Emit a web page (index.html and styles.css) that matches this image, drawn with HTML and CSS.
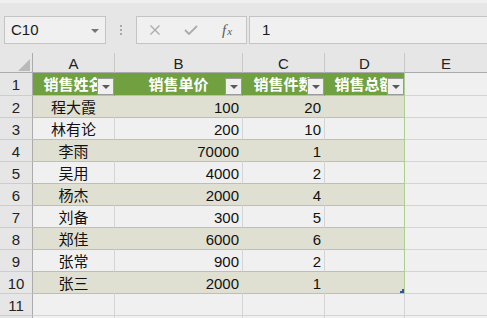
FILE: index.html
```html
<!DOCTYPE html>
<html lang="zh-CN">
<head>
<meta charset="utf-8">
<title>Sheet</title>
<link rel="stylesheet" href="styles.css">
</head>
<body>
<div class="ribbon-edge"></div>
<div class="formula-bar">
  <div class="name-box"><span class="name-text">C10</span><span class="caret"></span></div>
  <div class="grip"><i></i><i></i><i></i></div>
  <div class="fx-buttons">
    <span class="fx-btn"><svg width="12" height="10" viewBox="0 0 12 10"><path d="M1.5 0.5L10.5 9.5M10.5 0.5L1.5 9.5" stroke="#ababab" stroke-width="1.3" fill="none"/></svg></span>
    <span class="fx-btn"><svg width="14" height="10" viewBox="0 0 14 10"><path d="M1 5L5 9L13 1" stroke="#ababab" stroke-width="1.8" fill="none"/></svg></span>
    <span class="fx-btn fx-text"><span class="fx-f">f</span><span class="fx-x">x</span></span>
  </div>
  <div class="formula-input">1</div>
</div>
<div class="sheet">
  <div class="corner"><svg width="12" height="12" viewBox="0 0 12 12"><path d="M12 0V12H0Z" fill="#b9b9b9"/></svg></div>
  <div class="ch">A</div><div class="ch">B</div><div class="ch">C</div><div class="ch">D</div><div class="ch">E</div>

  <div class="rh rh1">1</div>
  <div class="th"><span class="th-text">销售姓名</span><span class="filter"></span></div>
  <div class="th"><span class="th-text">销售单价</span><span class="filter"></span></div>
  <div class="th"><span class="th-text">销售件数</span><span class="filter"></span></div>
  <div class="th th-last"><span class="th-text">销售总额</span><span class="filter"></span></div>
  <div class="c c1"></div>

  <div class="rh">2</div>
  <div class="td band ctr">程大霞</div><div class="td band num">100</div><div class="td band num">20</div><div class="td band last"></div><div class="c"></div>
  <div class="rh">3</div>
  <div class="td ctr">林有论</div><div class="td num">200</div><div class="td num">10</div><div class="td last"></div><div class="c"></div>
  <div class="rh">4</div>
  <div class="td band ctr">李雨</div><div class="td band num">70000</div><div class="td band num">1</div><div class="td band last"></div><div class="c"></div>
  <div class="rh">5</div>
  <div class="td ctr">吴用</div><div class="td num">4000</div><div class="td num">2</div><div class="td last"></div><div class="c"></div>
  <div class="rh">6</div>
  <div class="td band ctr">杨杰</div><div class="td band num">2000</div><div class="td band num">4</div><div class="td band last"></div><div class="c"></div>
  <div class="rh">7</div>
  <div class="td ctr">刘备</div><div class="td num">300</div><div class="td num">5</div><div class="td last"></div><div class="c"></div>
  <div class="rh">8</div>
  <div class="td band ctr">郑佳</div><div class="td band num">6000</div><div class="td band num">6</div><div class="td band last"></div><div class="c"></div>
  <div class="rh">9</div>
  <div class="td ctr">张常</div><div class="td num">900</div><div class="td num">2</div><div class="td last"></div><div class="c"></div>
  <div class="rh">10</div>
  <div class="td band ctr">张三</div><div class="td band num">2000</div><div class="td band num">1</div><div class="td band last handle-cell"><svg class="handle" width="4" height="4" viewBox="0 0 4 4"><path d="M2 0H4V4H0V2H2Z" fill="#30549f"/></svg></div><div class="c"></div>

  <div class="rh">11</div>
  <div class="c"></div><div class="c"></div><div class="c"></div><div class="c"></div><div class="c"></div>
  <div class="rh"></div>
  <div class="c"></div><div class="c"></div><div class="c"></div><div class="c"></div><div class="c"></div>
</div>
</body>
</html>
```
FILE: styles.css
```css
* { box-sizing: border-box; }
html, body {
  margin: 0;
  padding: 0;
  width: 487px;
  height: 318px;
  overflow: hidden;
  background: #e6e6e6;
  font-family: "Liberation Sans", "Noto Sans CJK SC", sans-serif;
  font-size: 15px;
  color: #1e1e1e;
}
.ribbon-edge {
  height: 3px;
  background: #efefef;
}
.formula-bar {
  display: flex;
  align-items: stretch;
  height: 50px;
  padding: 13px 0 9px 4px;
}
.name-box {
  width: 102px;
  height: 28px;
  border: 1px solid #c4c4c4;
  background: #f0f0f0;
  display: flex;
  align-items: center;
  justify-content: space-between;
  padding: 0 6px 0 6px;
}
.name-text {
  line-height: 26px;
  color: #1a1a1a;
}
.caret {
  width: 0;
  height: 0;
  border-left: 4px solid transparent;
  border-right: 4px solid transparent;
  border-top: 4px solid #767676;
  margin-top: 1px;
}
.grip {
  width: 30px;
  display: flex;
  flex-direction: column;
  align-items: center;
  justify-content: center;
  gap: 2px;
}
.grip i {
  display: block;
  width: 2px;
  height: 2px;
  background: #a9a9a9;
}
.fx-buttons {
  width: 111px;
  height: 28px;
  border: 1px solid #c4c4c4;
  background: #f0f0f0;
  display: flex;
  align-items: center;
  padding-left: 0;
}
.fx-btn {
  width: 36px;
  display: flex;
  justify-content: center;
  align-items: center;
}
.fx-text {
  font-family: "Liberation Serif", "DejaVu Serif", serif;
  font-style: italic;
  color: #5a5a5a;
  font-size: 15px;
  line-height: 1;
}
.fx-f { font-size: 15px; }
.fx-x { font-size: 11px; margin-left: 1px; margin-top: 3px; }
.formula-input {
  flex: 1;
  margin-left: 2px;
  margin-right: -2px;
  height: 28px;
  border: 1px solid #c4c4c4;
  background: #f0f0f0;
  line-height: 26px;
  padding-left: 12px;
  color: #1a1a1a;
}
.sheet {
  display: grid;
  grid-template-columns: 33px 82px 128px 82px 80px 83px;
  grid-template-rows: 20px 23px repeat(11, 22px);
}
.sheet > div {
  border-right: 1px solid #d4d4d4;
  border-bottom: 1px solid #d4d4d4;
  white-space: nowrap;
  overflow: hidden;
  line-height: 18px;
  padding-top: 3px;
}
.sheet > .corner {
  background: #e6e6e6;
  border-right: 1px solid #ababab;
  border-bottom: 1px solid #ababab;
  display: flex;
  justify-content: flex-end;
  align-items: flex-end;
  padding: 0 2px 1px 0;
}
.corner svg { display: block; }
.sheet > .ch {
  background: #e6e6e6;
  border-right: 1px solid #c9c9c9;
  border-bottom: 1px solid #ababab;
  text-align: center;
  padding-top: 2px;
  color: #222;
}
.sheet > .rh {
  background: #e6e6e6;
  border-right: 1px solid #ababab;
  border-bottom: 1px solid #cdcdcd;
  text-align: center;
  color: #222;
}
.sheet > .th {
  position: relative;
  background: #70a040;
  border-right: 1px solid #70a040;
  border-bottom: 1px solid #a9d08e;
  color: #ffffff;
  font-weight: bold;
  text-align: center;
}
.sheet > .th-last { border-right-color: #a9d08e; }
.th-text { display: block; }
.filter {
  position: absolute;
  right: 0;
  bottom: 0;
  width: 17px;
  height: 17px;
  background: #f0f0f0;
  border: 1px solid #9a9a9a;
}
.filter::after {
  content: "";
  position: absolute;
  left: 4px;
  top: 6px;
  border-left: 4px solid transparent;
  border-right: 4px solid transparent;
  border-top: 4px solid #5a5a5a;
}
.sheet > .td {
  background: #f0f0f0;
  border-right: 1px solid #d4d4d4;
  border-bottom: 1px solid #a9d08e;
  color: #111;
}
.sheet > .td.band {
  background: #e0e0d2;
  border-right-color: #e0e0d2;
}
.sheet > .td.last { border-right-color: #a9d08e; }
.ctr { text-align: center; }
.num { text-align: right; padding-right: 3px; }
.handle-cell { position: relative; }
.handle {
  position: absolute;
  right: 0;
  bottom: 0;
  display: block;
}
.sheet > .c { background: #f0f0f0; }
.sheet > .rh1 { padding-top: 3px; }
```
